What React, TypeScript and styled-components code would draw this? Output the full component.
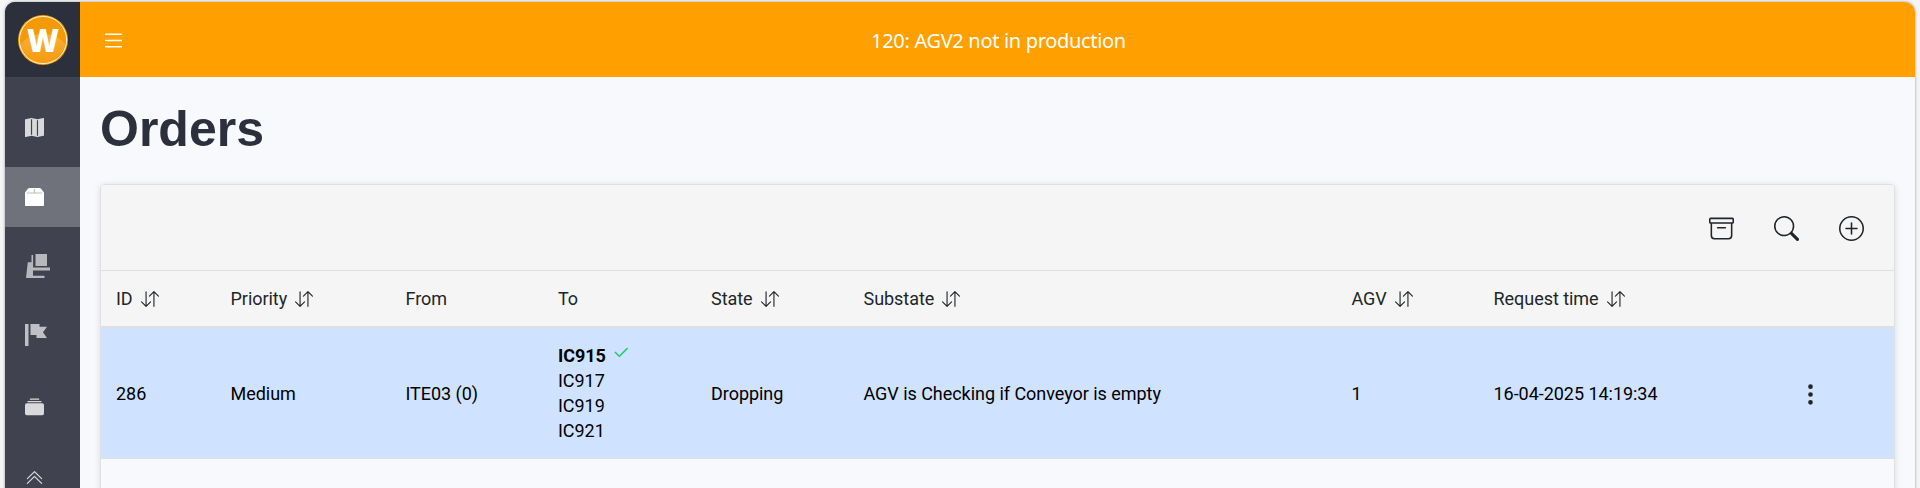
import React from "react";
import styled, { createGlobalStyle } from "styled-components";
import {
  BsArchive,
  BsArrowDownUp,
  BsCheck2,
  BsChevronDoubleUp,
  BsCollectionFill,
  BsList,
  BsMapFill,
  BsPlusCircle,
  BsSearch,
  BsThreeDotsVertical,
} from "react-icons/bs";

const GlobalStyle = createGlobalStyle`
  * { box-sizing: border-box; }
  body { margin: 0; background: #f5f5f5; overflow: hidden; }
`;

const Page = styled.div`
  height: 488px;
  padding: 2px 5px 0;
  overflow: hidden;
`;

const Shell = styled.div`
  display: grid;
  grid-template-columns: 75px 1fr;
  height: 520px;
  border-radius: 10px;
  overflow: hidden;
  background: #f8f9fd;
  box-shadow: 0 0 3px rgba(0, 0, 0, 0.4);
`;

const Sidebar = styled.aside`
  display: flex;
  flex-direction: column;
  background: #40434f;
`;

const LogoBox = styled.div`
  flex: none;
  height: 75px;
  padding: 13px 0 0 13px;
  background: #2c303c;
  svg { display: block; }
`;

const Nav = styled.nav`
  display: flex;
  flex-direction: column;
  gap: 10px;
  padding-top: 20px;
`;

const NavItem = styled.a<{ $active?: boolean }>`
  display: flex;
  align-items: center;
  height: 60px;
  padding-left: 20px;
  color: ${(p) => (p.$active ? "#ffffff" : "#d9d9dc")};
  background: ${(p) => (p.$active ? "#70727b" : "transparent")};
`;

const Main = styled.main`
  display: flex;
  flex-direction: column;
`;

const TopBar = styled.header`
  display: grid;
  grid-template-columns: 60px 1fr 60px;
  align-items: center;
  height: 75px;
  padding: 1px 19px 0 21px;
  background: #ffa000;
  color: #fff;
`;

const Alert = styled.div`
  text-align: center;
  font: 20px/30px "Noto Sans", sans-serif;
  letter-spacing: -0.32px;
  padding-top: 1px;
`;

const Title = styled.h1`
  margin: 21px 0 0 20px;
  font: bold 50px/62px "Liberation Sans", Arial, sans-serif;
  color: #2c303c;
`;

const Card = styled.section`
  flex: 1;
  margin: 24px 20px 0;
  border: 1px solid #dfe0e2;
  border-radius: 4px 4px 0 0;
  box-shadow: 0 1px 6px rgba(0, 0, 0, 0.12);
  font: 18px/25px Roboto, sans-serif;
  letter-spacing: -0.04px;
  overflow: hidden;
`;

const Toolbar = styled.div`
  display: flex;
  align-items: center;
  justify-content: flex-end;
  gap: 40px;
  height: 86px;
  padding: 2px 30px 0 0;
  border-bottom: 1px solid #dfdfdf;
  background: #f5f5f5;
  color: #212529;
`;

const Row = styled.div`
  display: grid;
  grid-template-columns: 114.5px 175px 152.5px 153px 152.5px 488px 142px 304px 1fr;
  align-items: center;
  padding-left: 15px;
`;

const HeadRow = styled(Row)`
  height: 57px;
  border-bottom: 2px solid #dfdfdf;
  background: #f5f5f5;
  color: #212529;
`;

const OrderRow = styled(Row)`
  height: 131px;
  padding-top: 1px;
  border-bottom: 1px solid #dedfe1;
  background: #cfe2ff;
  color: #000;
  > svg { margin-top: 2px; }
`;

const HeadCell = styled.div`
  display: flex;
  align-items: center;
  gap: 8px;
`;

const StopList = styled.div`
  padding-bottom: 1px;
`;

const Stop = styled.div<{ $current?: boolean }>`
  display: flex;
  align-items: center;
  gap: 6px;
  height: 25px;
  font-weight: ${(p) => (p.$current ? 700 : 400)};
  svg { margin-top: -5px; color: #12cc62; stroke: #12cc62; stroke-width: 0.3px; }
`;

const ForkliftHolder = styled.span`
  display: flex;
`;

const FlagHolder = styled.span`
  display: flex;
  padding-bottom: 4px;
`;

const Logo = () => (
  <svg width="50" height="50" viewBox="0 0 50 50">
    <defs>
      <linearGradient id="gloss" x1="0" y1="0" x2="0" y2="1">
        <stop offset="0" stopColor="#f8ae3d" />
        <stop offset="1" stopColor="#f59b0b" />
      </linearGradient>
      <clipPath id="disc"><circle cx="25" cy="25" r="23" /></clipPath>
    </defs>
    <circle cx="25" cy="25" r="25" fill="#f49a05" />
    <ellipse cx="25" cy="34" rx="23" ry="15" fill="url(#gloss)" clipPath="url(#disc)" />
    <circle cx="25" cy="25" r="23.6" fill="none" stroke="#fff0d5" strokeWidth="1" />
    <text x="25" y="37.2" textAnchor="middle" textLength="32" lengthAdjust="spacingAndGlyphs"
      fontFamily="Open Sans, sans-serif" fontWeight="800" fontSize="31" fill="#fff">W</text>
  </svg>
);

const BoxIcon = () => (
  <svg width="19" height="18" viewBox="0 0 19 18">
    <path d="M4.500 0h10q.8 0 1.400.6L19 4.500v12.800q0 .7-.7.7H.7q-.7 0-.7-.7V4.500L3.100.6Q3.700 0 4.500 0z" fill="currentColor" />
    <path d="M2 5h15M9.500 1v4" stroke="#bfc0c5" strokeWidth="1.2" fill="none" />
  </svg>
);

const ForkliftIcon = () => (
  <svg width="26" height="26" viewBox="0 0 26 26" fill="#b7b8be">
    <path d="M10.5 0H22v12H10.5z" />
    <path d="M6.5 1h1.600v12.600H25v3H8v5.200h11.500V24H1L2.800 8.300h3.700z" />
  </svg>
);

const FlagIcon = () => (
  <svg width="23" height="22" viewBox="0 0 23 22" fill="#bfc0c6">
    <path d="M0 0h3.500v22H0zM5.500 0h9v2.700H22l-4 5.600 4 5.700H11.500v-3h-6z" />
  </svg>
);

const columns = [
  { label: "ID", sortable: true },
  { label: "Priority", sortable: true },
  { label: "From" },
  { label: "To" },
  { label: "State", sortable: true },
  { label: "Substate", sortable: true },
  { label: "AGV", sortable: true },
  { label: "Request time", sortable: true },
];

const stops = ["IC915", "IC917", "IC919", "IC921"];

export default function App() {
  return (
    <Page>
      <GlobalStyle />
      <Shell>
        <Sidebar>
          <LogoBox><Logo /></LogoBox>
          <Nav>
            <NavItem><BsMapFill size={19} /></NavItem>
            <NavItem $active><BoxIcon /></NavItem>
            <NavItem><ForkliftHolder><ForkliftIcon /></ForkliftHolder></NavItem>
            <NavItem><FlagHolder><FlagIcon /></FlagHolder></NavItem>
            <NavItem><BsCollectionFill size={19} /></NavItem>
            <NavItem><BsChevronDoubleUp size={19} /></NavItem>
          </Nav>
        </Sidebar>
        <Main>
          <TopBar>
            <BsList size={25} />
            <Alert>120: AGV2 not in production</Alert>
          </TopBar>
          <Title>Orders</Title>
          <Card>
            <Toolbar>
              <BsArchive size={25} />
              <BsSearch size={25} />
              <BsPlusCircle size={25} />
            </Toolbar>
            <HeadRow>
              {columns.map((c) => (
                <HeadCell key={c.label}>
                  {c.label}
                  {c.sortable && <BsArrowDownUp size={18} />}
                </HeadCell>
              ))}
            </HeadRow>
            <OrderRow>
              <div>286</div>
              <div>Medium</div>
              <div>ITE03 (0)</div>
              <StopList>
                {stops.map((s, i) => (
                  <Stop key={s} $current={i === 0}>
                    {s}
                    {i === 0 && <BsCheck2 size={18} />}
                  </Stop>
                ))}
              </StopList>
              <div>Dropping</div>
              <div>AGV is Checking if Conveyor is empty</div>
              <div>1</div>
              <div>16-04-2025 14:19:34</div>
              <BsThreeDotsVertical size={25} color="#212529" />
            </OrderRow>
          </Card>
        </Main>
      </Shell>
    </Page>
  );
}
